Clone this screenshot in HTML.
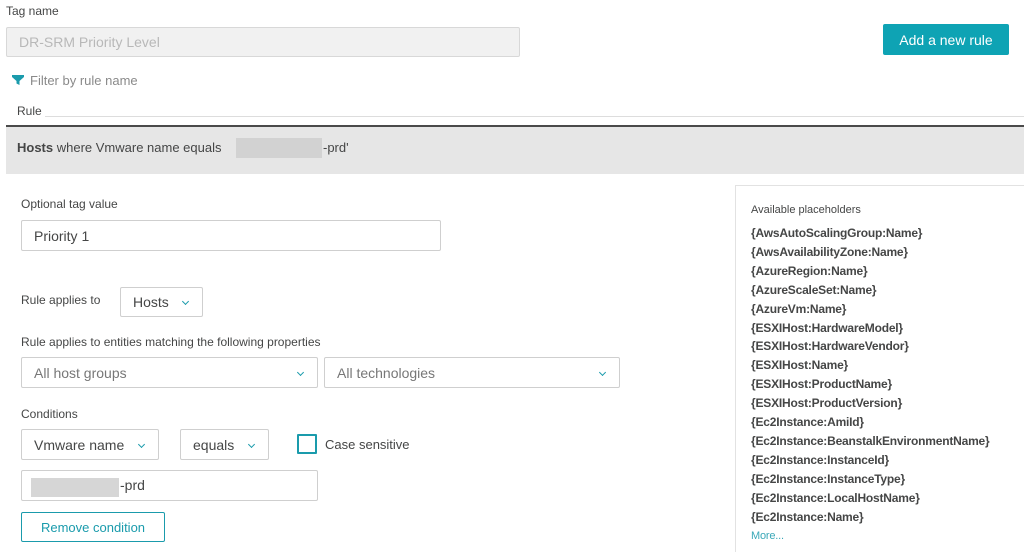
<!DOCTYPE html>
<html style="overflow:hidden;height:552px"><head><style>
*{box-sizing:border-box;margin:0;padding:0}
body{width:1024px;height:552px;overflow:hidden;background:#fff;font-family:"Liberation Sans",sans-serif;color:#454646;position:relative}
.a{position:absolute}
.lbl{font-size:12px;color:#454646}
.inp{position:absolute;border:1px solid #cfcfcf;border-radius:2px;background:#fff;font-size:14px;color:#454646;padding-left:12px;display:flex;align-items:center}
.sel{position:absolute;border:1px solid #cfcfcf;border-radius:2px;background:#fff;font-size:14px;color:#454646;padding-left:12px;display:flex;align-items:center}
.chev{position:absolute;right:14px;top:50%;width:5px;height:5px;border-right:1.5px solid #1a9bac;border-bottom:1.5px solid #1a9bac;transform:translateY(-60%) rotate(45deg)}
.ph{font-size:12px;font-weight:bold;color:#454646;line-height:18.9px;letter-spacing:-0.2px}
</style></head><body>
<div class="a lbl" style="left:6px;top:4px">Tag name</div>
<div class="inp" style="left:6px;top:27px;width:514px;height:30px;background:#f1f1f1;color:#b8b8b8;border-color:#d8d8d8">DR-SRM Priority Level</div>
<div class="a" style="left:883px;top:24px;width:126px;height:31px;background:#0ea3b4;border-radius:2px;color:#fff;font-size:14px;display:flex;align-items:center;justify-content:center">Add a new rule</div>
<svg class="a" style="left:12px;top:74px" width="12" height="12" viewBox="0 0 12 12"><path d="M0 1h12v2L7.5 7v4l-3-1.5V7L0 3z" fill="#1a9bac"/></svg>
<div class="a" style="left:30px;top:73px;font-size:13px;color:#8a8a8a">Filter by rule name</div>
<div class="a lbl" style="left:17px;top:104px">Rule</div>
<div class="a" style="left:45px;top:116px;width:979px;height:1px;background:#ddd"></div>
<div class="a" style="left:6px;top:125px;width:1018px;height:2px;background:#4a4a4a"></div>
<div class="a" style="left:6px;top:127px;width:1018px;height:47px;background:#e6e6e6"></div>
<div class="a" style="left:17px;top:140px;font-size:13px;color:#454646"><b>Hosts</b> where Vmware name equals</div>
<div class="a" style="left:236px;top:138px;width:86px;height:20px;background:#d2d2d2"></div>
<div class="a" style="left:323px;top:140px;font-size:13px">-prd'</div>
<div class="a lbl" style="left:21px;top:197px">Optional tag value</div>
<div class="inp" style="left:21px;top:220px;width:420px;height:31px">Priority 1</div>
<div class="a lbl" style="left:21px;top:293px">Rule applies to</div>
<div class="sel" style="left:120px;top:287px;width:83px;height:30px">Hosts<span class="chev"></span></div>
<div class="a lbl" style="left:21px;top:335px">Rule applies to entities matching the following properties</div>
<div class="sel" style="left:21px;top:357px;width:297px;height:31px;color:#777">All host groups<span class="chev"></span></div>
<div class="sel" style="left:324px;top:357px;width:296px;height:31px;color:#777">All technologies<span class="chev"></span></div>
<div class="a lbl" style="left:21px;top:407px">Conditions</div>
<div class="sel" style="left:21px;top:429px;width:138px;height:31px">Vmware name<span class="chev"></span></div>
<div class="sel" style="left:180px;top:429px;width:89px;height:31px">equals<span class="chev"></span></div>
<div class="a" style="left:297px;top:434px;width:20px;height:20px;border:2px solid #1a9bac;border-radius:1px"></div>
<div class="a" style="left:325px;top:437px;font-size:13px">Case sensitive</div>
<div class="inp" style="left:21px;top:470px;width:297px;height:31px"></div>
<div class="a" style="left:31px;top:478px;width:88px;height:19px;background:#d6d6d6"></div>
<div class="a" style="left:120px;top:477px;font-size:14px">-prd</div>
<div class="a" style="left:21px;top:512px;width:144px;height:30px;border:1px solid #1a9bac;border-radius:2px;color:#1a9bac;font-size:13px;display:flex;align-items:center;justify-content:center">Remove condition</div>
<div class="a" style="left:735px;top:185px;width:300px;height:380px;border:1px solid #e2e2e2"></div>
<div class="a" style="left:751px;top:204px;font-size:11px;color:#454646">Available placeholders</div>
<div class="a" style="left:751px;top:224px">
<div class="ph">{AwsAutoScalingGroup:Name}</div>
<div class="ph">{AwsAvailabilityZone:Name}</div>
<div class="ph">{AzureRegion:Name}</div>
<div class="ph">{AzureScaleSet:Name}</div>
<div class="ph">{AzureVm:Name}</div>
<div class="ph">{ESXIHost:HardwareModel}</div>
<div class="ph">{ESXIHost:HardwareVendor}</div>
<div class="ph">{ESXIHost:Name}</div>
<div class="ph">{ESXIHost:ProductName}</div>
<div class="ph">{ESXIHost:ProductVersion}</div>
<div class="ph">{Ec2Instance:AmiId}</div>
<div class="ph">{Ec2Instance:BeanstalkEnvironmentName}</div>
<div class="ph">{Ec2Instance:InstanceId}</div>
<div class="ph">{Ec2Instance:InstanceType}</div>
<div class="ph">{Ec2Instance:LocalHostName}</div>
<div class="ph">{Ec2Instance:Name}</div>
<div class="ph" style="font-weight:normal;color:#3aa8b8;font-size:11px">More...</div>
</div>
</body></html>
